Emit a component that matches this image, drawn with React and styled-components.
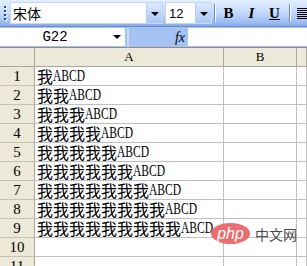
import React from "react";
import styled, { createGlobalStyle } from "styled-components";

const GlobalStyle = createGlobalStyle`
  html, body {
    margin: 0;
    padding: 0;
    background: #ffffff;
    overflow: hidden;
  }
`;

const Page = styled.div`
  position: relative;
  width: 307px;
  height: 266px;
  overflow: hidden;
  display: flex;
  flex-direction: column;
`;

/* ---------- toolbar ---------- */

const Toolbar = styled.div`
  height: 26px;
  border-bottom: 1px solid #6a8ccb;
  background: linear-gradient(#e3efff 0%, #c6dcfc 45%, #9dbdf2 85%, #86a9e6 100%);
  display: flex;
  align-items: center;
  flex-shrink: 0;
  overflow: hidden;

  & > * {
    flex-shrink: 0;
  }
`;

const Grip = styled.div`
  width: 10px;
  display: flex;
  flex-direction: column;
  align-items: center;
  gap: 2px;

  span {
    width: 2px;
    height: 2px;
    background: #27418f;
    box-shadow: 1px 1px 0 #ffffff;
  }
`;

const Combo = styled.div`
  width: ${(p) => p.width}px;
  height: 22px;
  box-sizing: border-box;
  margin-right: ${(p) => p.gap || 0}px;
  background: #ffffff;
  border: 1px solid #c5d8f7;
  display: flex;
  align-items: stretch;
`;

const ComboText = styled.div`
  flex: 1;
  display: flex;
  align-items: center;
  padding-left: ${(p) => p.pad || 2}px;
  font-family: ${(p) => p.font};
  font-size: ${(p) => p.size}px;
  color: #000000;
`;

const ComboArrow = styled.div`
  width: 15px;
  background: linear-gradient(#dce9fd, #a8c6f4);
  border-left: 1px solid #b6cdf2;
  display: flex;
  align-items: center;
  justify-content: center;

  &::after {
    content: "";
    border-left: 4px solid transparent;
    border-right: 4px solid transparent;
    border-top: 4px solid #000000;
    margin-top: 2px;
  }
`;

const Separator = styled.div`
  width: 1px;
  height: 18px;
  margin-left: ${(p) => p.left}px;
  margin-right: ${(p) => p.right}px;
  background: #6a8ccb;
  box-shadow: 1px 0 0 #ffffff;
`;

const ToolButton = styled.div`
  width: 23px;
  height: 20px;
  display: flex;
  align-items: center;
  justify-content: center;
  font-family: "Liberation Serif", serif;
  font-size: 15px;
  font-weight: bold;
  font-style: ${(p) => (p.italic ? "italic" : "normal")};
  text-decoration: ${(p) => (p.underline ? "underline" : "none")};
  color: #000000;
`;

const AlignIcon = styled.div`
  width: 12px;
  height: 11px;
  display: flex;
  flex-direction: column;
  justify-content: space-between;

  span {
    height: 1px;
    background: #000000;
  }
`;

/* ---------- formula bar ---------- */

const FormulaBar = styled.div`
  height: 20px;
  background: #a4c3f4;
  display: flex;
  align-items: stretch;
  padding-top: 1px;
  box-sizing: border-box;
  flex-shrink: 0;
`;

const NameBox = styled.div`
  width: 125px;
  height: 18px;
  background: #ffffff;
  display: flex;
  align-items: center;
`;

const NameText = styled.div`
  width: 110px;
  text-align: center;
  font-family: "Liberation Mono", monospace;
  font-size: 14px;
  color: #000000;
`;

const SmallArrow = styled.div`
  width: 13px;
  display: flex;
  justify-content: center;

  &::after {
    content: "";
    border-left: 4px solid transparent;
    border-right: 4px solid transparent;
    border-top: 4px solid #000000;
  }
`;

const BarDivider = styled.div`
  width: 2px;
  margin-left: 2px;
  background: #c9dcfa;
`;

const FxLabel = styled.div`
  width: 59px;
  display: flex;
  align-items: center;
  justify-content: flex-end;
  padding-right: 3px;
  box-sizing: border-box;
  font-family: "Liberation Serif", serif;
  font-style: italic;
  font-size: 14px;
  color: #000000;
`;

const FormulaInput = styled.div`
  flex: 1;
  height: 18px;
  background: #ffffff;
`;

/* ---------- sheet ---------- */

const Sheet = styled.div`
  display: grid;
  grid-template-columns: 35px 189px 73px 1fr;
  grid-auto-rows: 19px;
  border-top: 1px solid #8f8c80;
  flex: 1;
  overflow: hidden;
`;

const HeadCell = styled.div`
  box-sizing: border-box;
  background: #ece9d8;
  border-right: 1px solid #aca899;
  border-bottom: 1px solid ${(p) => (p.top ? "#aca899" : "#c6c3b6")};
  display: flex;
  align-items: center;
  justify-content: center;
  font-family: "Liberation Serif", serif;
  font-size: ${(p) => (p.top ? 13 : 15)}px;
  color: #000000;
`;

const Cell = styled.div`
  box-sizing: border-box;
  border-right: 1px solid #c0c0c0;
  border-bottom: 1px solid #c0c0c0;
  display: flex;
  align-items: flex-end;
  padding: 0 0 0 2px;
  white-space: nowrap;
  font-family: "Noto Sans CJK SC", "Liberation Serif", sans-serif;
  font-size: 16px;
  line-height: 18px;
  color: #000000;
`;

const Latin = styled.span`
  display: inline-block;
  font-family: "Liberation Serif", serif;
  font-size: 16px;
  transform: scaleX(0.72);
  transform-origin: left center;
  margin-right: -12px;
`;

/* ---------- watermark overlay ---------- */

const Watermark = styled.div`
  position: absolute;
  left: 211px;
  top: 223px;
  display: flex;
  align-items: center;
  gap: 5px;
`;

const PhpBadge = styled.div`
  width: 39px;
  height: 21px;
  border-radius: 50%;
  background: #ea6d70;
  display: flex;
  align-items: center;
  justify-content: center;
  font-family: "Liberation Sans", sans-serif;
  font-style: italic;
  font-size: 16px;
  color: #ffffff;
`;

const PhpText = styled.div`
  font-family: "Noto Sans CJK SC", sans-serif;
  font-size: 14px;
  color: #4a4a4a;
`;

const rows = Array.from({ length: 11 }, (_, i) => i + 1);

export default function App() {
  return (
    <Page>
      <GlobalStyle />
      <Toolbar>
        <Grip>
          <span />
          <span />
          <span />
          <span />
        </Grip>
        <Combo width={153} gap={2}>
          <ComboText font={'"Noto Sans CJK SC", sans-serif'} size={14}>
            宋体
          </ComboText>
          <ComboArrow />
        </Combo>
        <Combo width={47}>
          <ComboText font={'"Liberation Sans", sans-serif'} size={13} pad={3}>
            12
          </ComboText>
          <ComboArrow />
        </Combo>
        <Separator left={2} right={2} />
        <ToolButton>B</ToolButton>
        <ToolButton italic>I</ToolButton>
        <ToolButton underline>U</ToolButton>
        <Separator left={3} right={7} />
        <AlignIcon>
          <span />
          <span />
          <span />
          <span />
          <span />
          <span />
        </AlignIcon>
      </Toolbar>

      <FormulaBar>
        <NameBox>
          <NameText>G22</NameText>
          <SmallArrow />
        </NameBox>
        <BarDivider />
        <FxLabel>fx</FxLabel>
        <FormulaInput />
      </FormulaBar>

      <Sheet>
        <HeadCell top />
        <HeadCell top>A</HeadCell>
        <HeadCell top>B</HeadCell>
        <HeadCell top />
        {rows.map((n) => (
          <React.Fragment key={n}>
            <HeadCell>{n}</HeadCell>
            <Cell>
              {n <= 9 && (
                <>
                  {"我".repeat(n)}
                  <Latin>ABCD</Latin>
                </>
              )}
            </Cell>
            <Cell />
            <Cell />
          </React.Fragment>
        ))}
      </Sheet>

      <Watermark>
        <PhpBadge>php</PhpBadge>
        <PhpText>中文网</PhpText>
      </Watermark>
    </Page>
  );
}
